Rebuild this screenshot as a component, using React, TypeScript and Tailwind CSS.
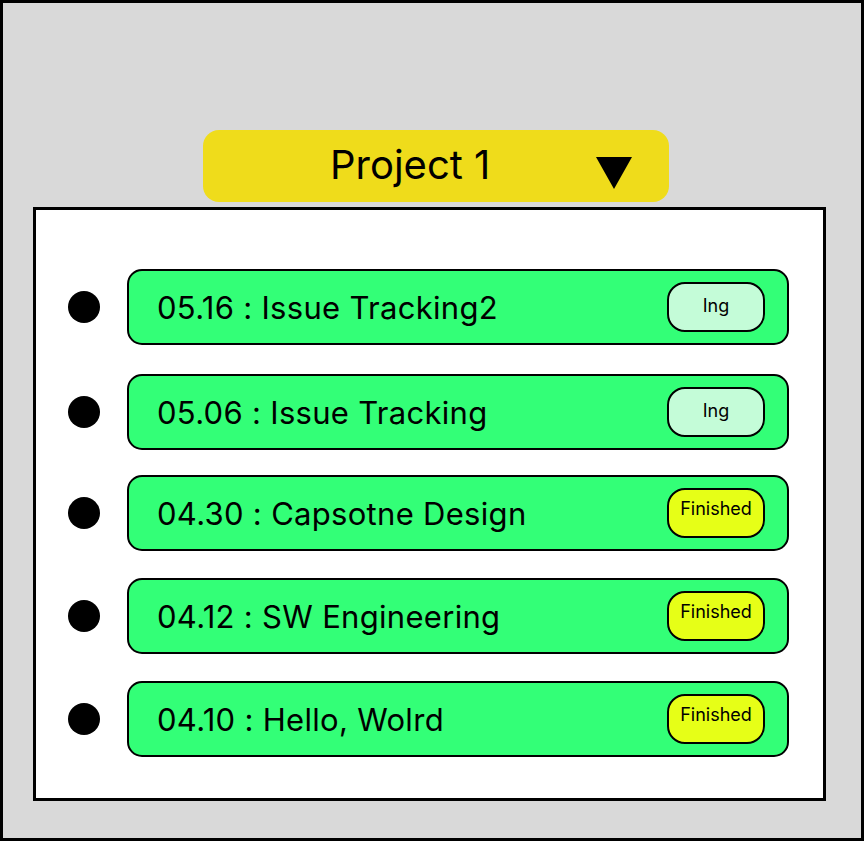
const items = [
  { date: '05.16', title: 'Issue Tracking2', status: 'Ing', gap: 'mt-0' },
  { date: '05.06', title: 'Issue Tracking', status: 'Ing', gap: 'mt-[29px]' },
  { date: '04.30', title: 'Capsotne Design', status: 'Finished', gap: 'mt-[25px]' },
  { date: '04.12', title: 'SW Engineering', status: 'Finished', gap: 'mt-[27px]' },
  { date: '04.10', title: 'Hello, Wolrd', status: 'Finished', gap: 'mt-[27px]' },
];

function StatusBadge({ status }: { status: string }) {
  const done = status === 'Finished';
  return (
    <span
      className={
        'w-[98px] h-[50px] rounded-[18px] border-2 border-black flex items-center justify-center text-black ' +
        (done ? 'bg-[#e6ff17] text-[18px] pb-[9px]' : 'bg-[#c4fcd8] text-[18px] pb-[3px]')
      }
    >
      {status}
    </span>
  );
}

export default function App() {
  return (
    <div
      className="w-[864px] h-[841px] border-[3px] border-black bg-[#d9d9d9] pt-[127px]"
      style={{ fontFamily: 'Inter, "Noto Sans", sans-serif' }}
    >
      <div className="ml-[200px] w-[466px] h-[72px] rounded-[16px] bg-[#efdc1b] flex items-center pl-[127px] pr-[37px]">
        <span className="text-[40px] leading-none text-black pb-[2px]">Project 1</span>
        <svg className="ml-auto mt-[14px]" width="36" height="32" viewBox="0 0 36 32">
          <polygon points="0,0 36,0 18,32" fill="#000" />
        </svg>
      </div>

      <div className="mt-[5px] ml-[30px] w-[793px] h-[594px] border-[3px] border-black bg-white pt-[59px] pl-[32px]">
        <div className="flex flex-col">
          {items.map((item, i) => (
            <div key={i} className={'flex items-center gap-[27px] ' + item.gap}>
              <span className="w-[32px] h-[32px] rounded-full bg-black shrink-0" />
              <div className="w-[662px] h-[76px] rounded-[15px] border-2 border-black bg-[#33ff77] flex items-center pl-[28px] pr-[22px]">
                <span className="text-[31px] tracking-[0.3px] text-black leading-none">
                  {item.date}&nbsp;:&nbsp;{item.title}
                </span>
                <span className="ml-auto">
                  <StatusBadge status={item.status} />
                </span>
              </div>
            </div>
          ))}
        </div>
      </div>
    </div>
  );
}
